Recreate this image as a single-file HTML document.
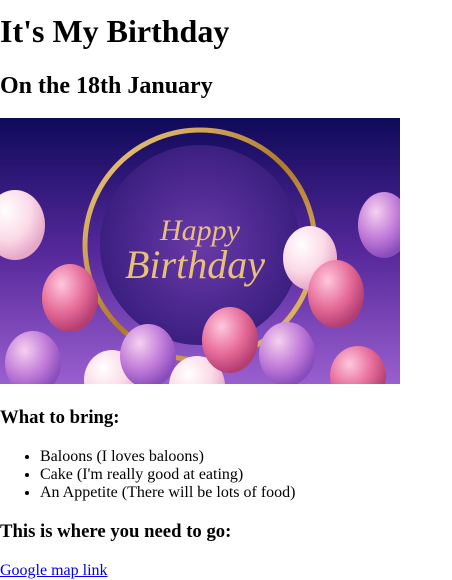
<!DOCTYPE html>
<html><head><meta charset="utf-8"><style>
body{margin:0;width:452px;height:580px;position:relative;font-family:"Liberation Serif",serif;color:#000;background:#fff;overflow:hidden}
.t{position:absolute;left:0;white-space:nowrap;margin:0}
ul{position:absolute;left:0;top:448px;margin:0;padding-left:40px;font-size:16px;line-height:18px}
a{color:#0000ee}
</style></head><body>
<div class="t" style="top:13px;font-size:32px;font-weight:bold;line-height:37px">It's My Birthday</div>
<div class="t" style="top:72px;font-size:24px;font-weight:bold;line-height:28px">On the 18th January</div>
<svg style="position:absolute;left:0;top:118px" width="400" height="266" viewBox="0 0 400 266">
<defs>
<linearGradient id="bg" x1="0" y1="0" x2="0" y2="1"><stop offset="0" stop-color="#0f0a5a"/><stop offset="0.5" stop-color="#55289a"/><stop offset="1" stop-color="#9a5fcf"/></linearGradient>
<radialGradient id="in" cx="0.5" cy="0.5" r="0.5"><stop offset="0" stop-color="#6a3aa8"/><stop offset="1" stop-color="#3b1f80"/></radialGradient>
<linearGradient id="gold" x1="0" y1="0" x2="1" y2="1"><stop offset="0" stop-color="#f3d28a"/><stop offset="0.5" stop-color="#b07a2a"/><stop offset="1" stop-color="#f0c878"/></linearGradient>
<radialGradient id="pk" cx="0.35" cy="0.3" r="0.7"><stop offset="0" stop-color="#ffc7dc"/><stop offset="0.6" stop-color="#e56a98"/><stop offset="1" stop-color="#b33e72"/></radialGradient>
<radialGradient id="wh" cx="0.35" cy="0.3" r="0.7"><stop offset="0" stop-color="#ffffff"/><stop offset="0.6" stop-color="#fbd9e6"/><stop offset="1" stop-color="#e6a6c8"/></radialGradient>
<radialGradient id="pu" cx="0.35" cy="0.3" r="0.7"><stop offset="0" stop-color="#f6d0f0"/><stop offset="0.6" stop-color="#c07ad8"/><stop offset="1" stop-color="#8a4cbc"/></radialGradient>
</defs>
<rect width="400" height="266" fill="url(#bg)"/>
<circle cx="200" cy="127" r="115" fill="none" stroke="url(#gold)" stroke-width="5"/>
<circle cx="200" cy="127" r="100" fill="url(#in)"/>
<text x="200" y="122" font-family="Liberation Serif,serif" font-style="italic" font-size="30" fill="#e8c07a" text-anchor="middle">Happy</text>
<text x="195" y="160" font-family="Liberation Serif,serif" font-style="italic" font-size="40" fill="#e8c07a" text-anchor="middle">Birthday</text>
<ellipse cx="15" cy="107" rx="30" ry="35" fill="url(#wh)"/>
<ellipse cx="70" cy="180" rx="28" ry="34" fill="url(#pk)"/>
<ellipse cx="33" cy="245" rx="28" ry="32" fill="url(#pu)"/>
<ellipse cx="112" cy="262" rx="28" ry="30" fill="url(#wh)"/>
<ellipse cx="148" cy="238" rx="28" ry="32" fill="url(#pu)"/>
<ellipse cx="197" cy="268" rx="28" ry="30" fill="url(#wh)"/>
<ellipse cx="230" cy="222" rx="28" ry="33" fill="url(#pk)"/>
<ellipse cx="287" cy="236" rx="28" ry="32" fill="url(#pu)"/>
<ellipse cx="310" cy="140" rx="27" ry="32" fill="url(#wh)"/>
<ellipse cx="336" cy="176" rx="28" ry="34" fill="url(#pk)"/>
<ellipse cx="384" cy="107" rx="26" ry="33" fill="url(#pu)"/>
<ellipse cx="358" cy="258" rx="28" ry="30" fill="url(#pk)"/>
</svg>
<div class="t" style="top:407px;font-size:18.72px;font-weight:bold;line-height:22px">What to bring:</div>
<ul>
<li>Baloons (I loves baloons)</li>
<li>Cake (I'm really good at eating)</li>
<li>An Appetite (There will be lots of food)</li>
</ul>
<div class="t" style="top:521px;font-size:18.72px;font-weight:bold;line-height:22px">This is where you need to go:</div>
<div class="t" style="top:562px;font-size:16px;line-height:18px"><a href="#">Google map link</a></div>
</body></html>
